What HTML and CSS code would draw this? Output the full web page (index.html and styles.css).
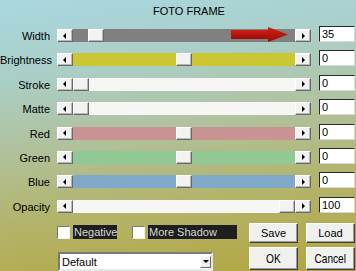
FILE: index.html
```html
<!DOCTYPE html>
<html lang="en">
<head>
    <meta charset="UTF-8">
    <meta name="viewport" content="width=device-width, initial-scale=1.0">
    <title>Foto Frame</title>
    <link rel="stylesheet" href="styles.css">
</head>
<body>
    <div class="dialog">
        <div class="title">FOTO FRAME</div>

        <div class="sliders">
            <div class="row">
                <span class="name">Width</span>
                <div class="scroll">
                    <span class="arrow left"></span>
                    <div class="track gray">
                        <span class="thumb" style="left: 15px"></span>
                        <svg class="pointer" width="57" height="15" viewBox="0 0 57 15">
                            <defs>
                                <linearGradient id="redfill" x1="0" y1="0" x2="0" y2="1">
                                    <stop offset="0" stop-color="#cc2216"/>
                                    <stop offset="1" stop-color="#9c0c08"/>
                                </linearGradient>
                            </defs>
                            <rect x="0" y="3" width="39" height="9" fill="url(#redfill)"/>
                            <polygon points="37,0 57,7.5 37,15" fill="url(#redfill)"/>
                        </svg>
                    </div>
                    <span class="arrow right"></span>
                </div>
                <input class="value" type="text" value="35">
            </div>
            <div class="row">
                <span class="name">Brightness</span>
                <div class="scroll">
                    <span class="arrow left"></span>
                    <div class="track yellow"><span class="thumb" style="left: 103px"></span></div>
                    <span class="arrow right"></span>
                </div>
                <input class="value" type="text" value="0">
            </div>
            <div class="row">
                <span class="name">Stroke</span>
                <div class="scroll">
                    <span class="arrow left"></span>
                    <div class="track white"><span class="thumb" style="left: 0px"></span></div>
                    <span class="arrow right"></span>
                </div>
                <input class="value" type="text" value="0">
            </div>
            <div class="row">
                <span class="name">Matte</span>
                <div class="scroll">
                    <span class="arrow left"></span>
                    <div class="track white"><span class="thumb" style="left: 0px"></span></div>
                    <span class="arrow right"></span>
                </div>
                <input class="value" type="text" value="0">
            </div>
            <div class="row">
                <span class="name">Red</span>
                <div class="scroll">
                    <span class="arrow left"></span>
                    <div class="track red"><span class="thumb" style="left: 103px"></span></div>
                    <span class="arrow right"></span>
                </div>
                <input class="value" type="text" value="0">
            </div>
            <div class="row">
                <span class="name">Green</span>
                <div class="scroll">
                    <span class="arrow left"></span>
                    <div class="track green"><span class="thumb" style="left: 103px"></span></div>
                    <span class="arrow right"></span>
                </div>
                <input class="value" type="text" value="0">
            </div>
            <div class="row">
                <span class="name">Blue</span>
                <div class="scroll">
                    <span class="arrow left"></span>
                    <div class="track blue"><span class="thumb" style="left: 103px"></span></div>
                    <span class="arrow right"></span>
                </div>
                <input class="value" type="text" value="0">
            </div>
            <div class="row">
                <span class="name">Opacity</span>
                <div class="scroll">
                    <span class="arrow left"></span>
                    <div class="track white"><span class="thumb" style="left: 206px"></span></div>
                    <span class="arrow right"></span>
                </div>
                <input class="value" type="text" value="100">
            </div>
        </div>

        <div class="actions">
            <div class="line">
                <div class="checks">
                    <span class="check">
                        <span class="box"></span>
                        <span class="text negative">Negative</span>
                    </span>
                    <span class="check">
                        <span class="box"></span>
                        <span class="text shadow">More Shadow</span>
                    </span>
                </div>
                <button class="btn">Save</button>
                <button class="btn">Load</button>
            </div>
            <div class="line">
                <div class="checks">
                    <div class="select">
                        <span class="current">Default</span>
                        <span class="drop"></span>
                    </div>
                </div>
                <button class="btn big"><span class="narrow">OK</span></button>
                <button class="btn big"><span class="narrow">Cancel</span></button>
            </div>
        </div>
    </div>
</body>
</html>
```

FILE: styles.css
```css
body {
    margin: 0;
    width: 356px;
    height: 271px;
    overflow: hidden;
    background: linear-gradient(172deg, #a9d7e0 0%, #aacfc8 24%, #b0c2a0 46%, #b3b46c 70%, #b3a53e 100%);
    font-family: "Liberation Sans", Arial, sans-serif;
    font-size: 11px;
    color: #000;
}

.title {
    padding: 4px 0 0 22px;
    height: 14px;
    line-height: 14px;
    text-align: center;
}

.sliders {
    margin-top: 8px;
}

.row {
    display: flex;
    align-items: flex-start;
    height: 24.4px;
}

.name {
    width: 50px;
    padding-top: 2px;
    line-height: 16px;
    text-align: right;
}

.scroll {
    display: flex;
    width: 254px;
    height: 13px;
    margin: 3px 0 0 7px;
}

.arrow,
.thumb {
    box-sizing: border-box;
    width: 16px;
    height: 13px;
    background: #f2f2f2;
    border: 1px solid;
    border-color: #ffffff #6a6a6a #6a6a6a #ffffff;
    box-shadow: inset -1px -1px #b8b8b8;
}

.arrow {
    display: flex;
    align-items: center;
    justify-content: center;
}

.arrow::after {
    content: "";
    border-top: 3px solid transparent;
    border-bottom: 3px solid transparent;
}

.arrow.left::after {
    border-right: 3px solid #000;
    margin-right: 1px;
}

.arrow.right::after {
    border-left: 3px solid #000;
    margin-left: 1px;
}

.track {
    position: relative;
    flex: 1;
}

.thumb {
    position: absolute;
    top: 0;
}

.pointer {
    position: absolute;
    left: 158px;
    top: -2px;
    overflow: visible;
}

.gray { background: #808080; }
.yellow { background: #cbc733; }
.white { background: #f6f6f4; }
.red { background: #c99394; }
.green { background: #92c893; }
.blue { background: #7fa8c9; }

.value {
    box-sizing: border-box;
    width: 36px;
    height: 16px;
    margin: 0 0 0 8px;
    padding: 0 0 0 2px;
    border: 1px solid;
    border-color: #2a2a2a #d8d8d8 #d8d8d8 #2a2a2a;
    background: #fff;
    font-family: "Liberation Sans", Arial, sans-serif;
    font-size: 11px;
    color: #000;
}

.actions {
    margin-top: 2px;
}

.line {
    display: flex;
    align-items: center;
    padding-left: 57px;
}

.line + .line {
    margin-top: 4px;
}

.checks {
    display: flex;
    align-items: flex-start;
    align-self: stretch;
    width: 192px;
}

.check {
    display: flex;
    align-items: center;
    margin-top: 2px;
}

.check + .check {
    margin-left: 15px;
}

.box {
    box-sizing: border-box;
    width: 13px;
    height: 13px;
    margin-right: 3px;
    background: #fff;
    border: 1px solid;
    border-color: #7a7a7a #f0f0f0 #f0f0f0 #7a7a7a;
}

.text {
    box-sizing: border-box;
    height: 14px;
    padding-left: 1px;
    line-height: 14px;
    background: #1e1e1e;
    color: #d6d6d6;
}

.negative { width: 44px; }
.shadow { width: 89px; }

.btn {
    box-sizing: border-box;
    width: 49px;
    height: 20px;
    padding: 0;
    background: #f0f0ee;
    border: 1px solid;
    border-color: #ffffff #404040 #404040 #ffffff;
    box-shadow: inset -1px -1px #9a9a9a;
    font-family: "Liberation Sans", Arial, sans-serif;
    font-size: 11px;
    color: #000;
}

.btn + .btn {
    margin-left: 8px;
}

.btn.big {
    height: 23px;
    font-size: 13px;
}

.narrow {
    display: inline-block;
    transform: scaleX(0.78);
}

.select {
    box-sizing: border-box;
    display: flex;
    align-items: center;
    align-self: flex-end;
    width: 155px;
    height: 19px;
    margin: 0 0 -1px 1px;
    padding-left: 2px;
    background: #fff;
    border: 2px solid;
    border-color: #7a7a7a #e8e8e8 #e8e8e8 #7a7a7a;
}

.current {
    flex: 1;
}

.drop {
    box-sizing: border-box;
    display: flex;
    align-items: center;
    justify-content: center;
    width: 11px;
    height: 12px;
    background: #efefef;
    border: 1px solid;
    border-color: #ffffff #6a6a6a #6a6a6a #ffffff;
}

.drop::after {
    content: "";
    border-left: 3px solid transparent;
    border-right: 3px solid transparent;
    border-top: 3px solid #000;
}
```
